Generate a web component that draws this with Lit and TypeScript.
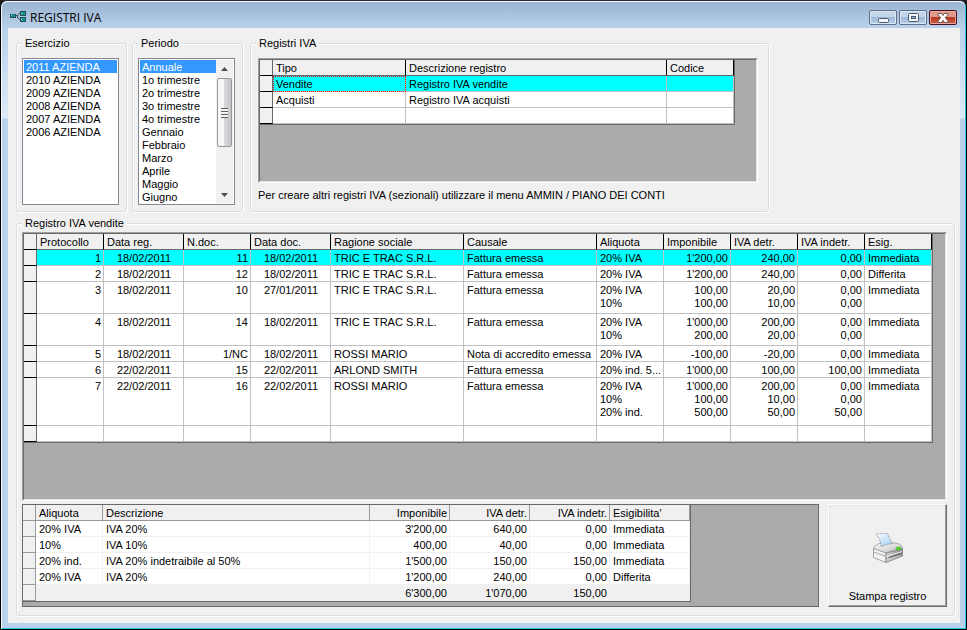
import { LitElement, html, css, svg, nothing } from "lit";
import { customElement, property } from "lit/decorators.js";
import { classMap } from "lit/directives/class-map.js";

type Align = "left" | "right" | "center";

interface Column {
  label: string;
  size: string;
  align?: Align;
}

interface Row {
  cells: string[][];
  selected?: boolean;
}

const row = (...cells: (string | string[])[]): Row => ({
  cells: cells.map((c) => (Array.isArray(c) ? c : [c])),
});

const REGISTER_COLUMNS: Column[] = [
  { label: "Tipo", size: "w133" },
  { label: "Descrizione registro", size: "w261" },
  { label: "Codice", size: "w67" },
];

const REGISTER_ROWS: Row[] = [
  { ...row("Vendite", "Registro IVA vendite", ""), selected: true },
  row("Acquisti", "Registro IVA acquisti", ""),
  row("", "", ""),
];

const ENTRY_COLUMNS: Column[] = [
  { label: "Protocollo", size: "w67", align: "right" },
  { label: "Data reg.", size: "w80", align: "center" },
  { label: "N.doc.", size: "w67", align: "right" },
  { label: "Data doc.", size: "w80", align: "center" },
  { label: "Ragione sociale", size: "w133" },
  { label: "Causale", size: "w133" },
  { label: "Aliquota", size: "w67" },
  { label: "Imponibile", size: "w67", align: "right" },
  { label: "IVA detr.", size: "w67", align: "right" },
  { label: "IVA indetr.", size: "w67", align: "right" },
  { label: "Esig.", size: "w67" },
];

const ENTRY_ROWS: Row[] = [
  {
    ...row("1", "18/02/2011", "11", "18/02/2011", "TRIC E TRAC S.R.L.", "Fattura emessa", "20% IVA", "1'200,00", "240,00", "0,00", "Immediata"),
    selected: true,
  },
  row("2", "18/02/2011", "12", "18/02/2011", "TRIC E TRAC S.R.L.", "Fattura emessa", "20% IVA", "1'200,00", "240,00", "0,00", "Differita"),
  row("3", "18/02/2011", "10", "27/01/2011", "TRIC E TRAC S.R.L.", "Fattura emessa", ["20% IVA", "10%"], ["100,00", "100,00"], ["20,00", "10,00"], ["0,00", "0,00"], "Immediata"),
  row("4", "18/02/2011", "14", "18/02/2011", "TRIC E TRAC S.R.L.", "Fattura emessa", ["20% IVA", "10%"], ["1'000,00", "200,00"], ["200,00", "20,00"], ["0,00", "0,00"], "Immediata"),
  row("5", "18/02/2011", "1/NC", "18/02/2011", "ROSSI MARIO", "Nota di accredito emessa", "20% IVA", "-100,00", "-20,00", "0,00", "Immediata"),
  row("6", "22/02/2011", "15", "22/02/2011", "ARLOND SMITH", "Fattura emessa", "20% ind. 5...", "1'000,00", "100,00", "100,00", "Immediata"),
  row("7", "22/02/2011", "16", "22/02/2011", "ROSSI MARIO", "Fattura emessa", ["20% IVA", "10%", "20% ind."], ["1'000,00", "100,00", "500,00"], ["200,00", "10,00", "50,00"], ["0,00", "0,00", "50,00"], "Immediata"),
  row("", "", "", "", "", "", "", "", "", "", ""),
];

const SUMMARY_COLUMNS: Column[] = [
  { label: "Aliquota", size: "w67" },
  { label: "Descrizione", size: "w267" },
  { label: "Imponibile", size: "w80", align: "right" },
  { label: "IVA detr.", size: "w80", align: "right" },
  { label: "IVA indetr.", size: "w80", align: "right" },
  { label: "Esigibilita'", size: "w80" },
];

const SUMMARY_ROWS: Row[] = [
  row("20% IVA", "IVA 20%", "3'200,00", "640,00", "0,00", "Immediata"),
  row("10%", "IVA 10%", "400,00", "40,00", "0,00", "Immediata"),
  row("20% ind.", "IVA 20% indetraibile al 50%", "1'500,00", "150,00", "150,00", "Immediata"),
  row("20% IVA", "IVA 20%", "1'200,00", "240,00", "0,00", "Differita"),
];

const SUMMARY_TOTAL = row("", "", "6'300,00", "1'070,00", "150,00", "");

const YEARS = ["2011", "2010", "2009", "2008", "2007", "2006"].map((y) => `${y} AZIENDA`);

const PERIODS = [
  "Annuale", "1o trimestre", "2o trimestre", "3o trimestre", "4o trimestre",
  "Gennaio", "Febbraio", "Marzo", "Aprile", "Maggio", "Giugno",
  "Luglio", "Agosto", "Settembre", "Ottobre", "Novembre", "Dicembre",
];

@customElement("data-grid")
export class DataGrid extends LitElement {
  @property({ attribute: false }) columns: Column[] = [];
  @property({ attribute: false }) rows: Row[] = [];
  @property({ attribute: false }) total?: Row;
  @property() label = "";
  @property({ type: Boolean }) flat = false;
  @property({ type: Boolean, attribute: "focus-cell" }) focusCell = false;

  static styles = css`
    :host {
      display: block;
      box-sizing: border-box;
      min-width: 0;
      overflow: hidden;
      background: #ababab;
      border: 1px solid;
      border-color: #a0a0a0 #fff #fff #a0a0a0;
    }
    :host([flat]) {
      border-color: #696969;
    }
    .well {
      box-sizing: border-box;
      height: 100%;
      border: 1px solid;
      border-color: #696969 #e3e3e3 #e3e3e3 #696969;
    }
    .well.flat {
      border: 0;
    }
    table {
      table-layout: fixed;
      width: 0;
      border-collapse: separate;
      border-spacing: 0;
      border: solid #696969;
      border-width: 0 1px 1px 0;
      background: #fff;
      color: #000;
      font-size: 11px;
      line-height: 13px;
    }
    .w13 { width: 13px; }
    .w67 { width: 67px; }
    .w80 { width: 80px; }
    .w133 { width: 133px; }
    .w261 { width: 261px; }
    .w267 { width: 267px; }
    th,
    td {
      box-sizing: border-box;
      height: 16px;
      padding: 2px 2px 0 3px;
      border: solid #c0c0c0;
      border-width: 0 1px 1px 0;
      font-weight: 400;
      text-align: left;
      vertical-align: top;
      white-space: nowrap;
      overflow: hidden;
    }
    .tall {
      height: 32px;
    }
    .taller {
      height: 48px;
    }
    thead th {
      background: #f0f0f0;
      border-color: #000;
      border-bottom-color: #696969;
    }
    .corner,
    .handle {
      padding: 0;
      background: #f0f0f0;
      border-color: #000;
      border-right-color: #696969;
    }
    .selected td {
      background: #0ff;
    }
    .selected .focused {
      outline: 1px dotted #f00;
      outline-offset: -1px;
    }
    .right { text-align: right; }
    .center { text-align: center; }
    .line { display: block; }
    .flat td {
      border-color: #f0f0f0;
    }
    .flat th {
      border-color: #999;
    }
    tfoot td {
      background: #f0f0f0;
    }
  `;

  private renderRow(r: Row, first = false) {
    const lines = Math.max(...r.cells.map((c) => c.length));
    return html`<tr class=${classMap({ selected: !!r.selected })}>
      <th class="handle" scope="row"></th>
      ${r.cells.map((cell, i) => {
        const align = this.columns[i].align ?? "left";
        return html`<td
          class=${classMap({
            [align]: true,
            tall: lines === 2,
            taller: lines === 3,
            focused: this.focusCell && first && i === 0,
          })}
        >${cell.length > 1 ? cell.map((t) => html`<span class="line">${t}</span>`) : cell[0]}</td>`;
      })}
    </tr>`;
  }

  render() {
    return html`<div class=${classMap({ well: true, flat: this.flat })}>
      <table aria-label=${this.label}>
        <colgroup>
          <col class="w13" />
          ${this.columns.map((c) => html`<col class=${c.size} />`)}
        </colgroup>
        <thead>
          <tr>
            <th class="corner"></th>
            ${this.columns.map(
              (c) => html`<th scope="col" class=${this.flat && c.align ? c.align : "left"}>${c.label}</th>`
            )}
          </tr>
        </thead>
        <tbody>
          ${this.rows.map((r, i) => this.renderRow(r, i === 0))}
        </tbody>
        ${this.total ? html`<tfoot>${this.renderRow(this.total)}</tfoot>` : nothing}
      </table>
    </div>`;
  }
}

const appIcon = svg`
  <svg class="app-icon" viewBox="0 0 16 12" width="16" height="12" aria-hidden="true" shape-rendering="crispEdges">
    <path d="M6 4h2v1H6zM8 3h1v1H8zM9 2h1v1H9zM7 5h1v2H7zM8 7h1v1H8zM9 8h1v1H9z" fill="#3c4a58"/>
    <rect x="0" y="3" width="6" height="4" fill="#2c4a58"/><rect x="1" y="3" width="4" height="3" fill="#0a8f86"/>
    <rect x="10" y="0" width="6" height="5" fill="#2c4a58"/><rect x="11" y="1" width="4" height="3" fill="#0a9a90"/>
    <rect x="10" y="6" width="6" height="5" fill="#2c4a58"/><rect x="11" y="7" width="4" height="3" fill="#0a9a90"/>
    <path d="M1 4h1v1H1zM11 2h1v1h-1zM11 8h1v1h-1z" fill="#9fe8e0"/>
  </svg>`;

const minimizeIcon = svg`
  <svg viewBox="0 0 12 10" width="12" height="10" aria-hidden="true">
    <rect x="1.500" y="5.500" width="10" height="4" rx="1" fill="#f4f6f8" stroke="#4b5a6e"/>
  </svg>`;

const maximizeIcon = svg`
  <svg viewBox="0 0 12 10" width="12" height="10" aria-hidden="true">
    <rect x="1.500" y=".5" width="10" height="8" rx="1" fill="#f4f6f8" stroke="#4b5a6e"/>
    <rect x="4.500" y="3.500" width="4" height="2" fill="#8fb0d4" stroke="#4b5a6e"/>
  </svg>`;

const closeIcon = svg`
  <svg viewBox="0 0 12 10" width="12" height="10" aria-hidden="true">
    <path d="M1 .5h3.500L6 2.500 7.500 .5H11v1L8.300 4.700 11 8v1.500H7.500L6 7.300 4.500 9.500H1V8l2.700-3.300L1 1.500z" fill="#fff" stroke="#5c4a50" stroke-width=".9"/>
  </svg>`;

const printerIcon = svg`
  <svg viewBox="0 0 30 30" width="30" height="30" aria-hidden="true">
    <defs>
      <linearGradient id="paper" x1="0" y1="0" x2="1" y2="1">
        <stop offset="0" stop-color="#f4faff"/><stop offset="1" stop-color="#a9cff5"/>
      </linearGradient>
      <linearGradient id="top" x1="0" y1="0" x2="1" y2="1">
        <stop offset="0" stop-color="#fafafa"/><stop offset=".5" stop-color="#dedede"/><stop offset="1" stop-color="#a4a4a4"/>
      </linearGradient>
      <linearGradient id="front" x1="0" y1="0" x2="1" y2="0">
        <stop offset="0" stop-color="#cfcfcf"/><stop offset="1" stop-color="#868686"/>
      </linearGradient>
    </defs>
    <path d="M.5 15.500Q1.500 12 6 10.500L19 9.500l7.500 1.500q3 2 3 4.500L13 21z" fill="url(#top)" stroke="#9a9a9a" stroke-width=".8"/>
    <path d="M3 1Q9-.2 15 .8q1.500 5 4.300 9.700Q13 10.500 8 13.300 7.500 6 3 1z" fill="url(#paper)"/>
    <path d="M8 13.300Q7.500 6 3 1 9-.2 15 .8q1.500 5 4.300 9.700" fill="none" stroke="#7c8894" stroke-width=".8" stroke-dasharray="1.500 1"/>
    <path d="M8 13.500q5-2.800 11.500-3" fill="none" stroke="#8e9aa6" stroke-width=".8"/>
    <path d="M.5 15.500L13 20v9.500L.5 24.500z" fill="#f4f4f4" stroke="#8e8e8e" stroke-width=".8"/>
    <path d="M13 20l16.500-4.500v7.500L13 29.500z" fill="url(#front)" stroke="#7c7c7c" stroke-width=".8"/>
    <path d="M.8 19L13 23.500" fill="none" stroke="#a2a2a2"/>
    <path d="M13 23.500L29 18.500" fill="none" stroke="#ececec"/>
    <path d="M15.500 24.500L28 20.500" fill="none" stroke="#606060"/>
    <path d="M15.500 27L28 22.500" fill="none" stroke="#d4d4d4" stroke-width=".8"/>
    <ellipse cx="25.500" cy="15.500" rx="2.600" ry="1.400" fill="#3fe01c" stroke="#5aa64a" stroke-width=".5"/>
  </svg>`;

@customElement("list-field")
export class ListField extends LitElement {
  @property() label = "";
  @property({ attribute: false }) items: string[] = [];
  @property({ type: Boolean }) scrollable = false;

  static styles = css`
    :host {
      display: flex;
      box-sizing: border-box;
      height: 147px;
      padding: 1px;
      border: 1px solid #828790;
      background: #fff;
      font-size: 11px;
    }
    select {
      flex: 1;
      min-width: 0;
      height: 100%;
      margin: 0;
      padding: 0;
      border: 0;
      border-radius: 0;
      outline: 0;
      background: #fff;
      color: #000;
      font: inherit;
      overflow-x: hidden;
      overflow-y: auto;
      scrollbar-width: none;
    }
    option {
      box-sizing: border-box;
      min-height: 13px;
      height: 13px;
      padding: 1px 2px 0;
      line-height: 12px;
    }
    option:checked {
      background: #39f linear-gradient(#39f, #39f);
      color: #fff;
    }
    .scrollbar {
      display: flex;
      flex-direction: column;
      flex: 0 0 17px;
      background: #f0f0f0;
    }
    .arrow {
      display: flex;
      align-items: center;
      justify-content: center;
      height: 17px;
      padding: 0;
      border: 0;
      background: none;
    }
    .track {
      flex: 1;
      padding: 1px 1px 0;
    }
    .thumb {
      box-sizing: border-box;
      height: 69px;
      border: 1px solid #979797;
      border-radius: 2px;
      background:
        repeating-linear-gradient(#606060 0 1px, #f4f4f4 1px 3px) center / 7px 10px no-repeat,
        linear-gradient(90deg, #f6f6f6 45%, #d9dadc 50%, #c4c5c8);
    }
  `;

  private scroll13(delta: number) {
    this.renderRoot.querySelector("select")?.scrollBy(0, delta * 13);
  }

  render() {
    return html`<select size="11" aria-label=${this.label}>
        ${this.items.map((t, i) => html`<option ?selected=${i === 0}>${t}</option>`)}
      </select>
      ${this.scrollable
        ? html`<div class="scrollbar">
            <button class="arrow" tabindex="-1" aria-label="Su" @click=${() => this.scroll13(-1)}>
              <svg viewBox="0 0 7 4" width="7" height="4"><path d="M0 4L3.500 0 7 4z" fill="#505050" /></svg>
            </button>
            <div class="track"><div class="thumb"></div></div>
            <button class="arrow" tabindex="-1" aria-label="Giu" @click=${() => this.scroll13(1)}>
              <svg viewBox="0 0 7 4" width="7" height="4"><path d="M0 0L3.500 4 7 0z" fill="#505050" /></svg>
            </button>
          </div>`
        : nothing}`;
  }
}

@customElement("app-root")
export class AppRoot extends LitElement {
  static styles = css`
    :host {
      display: block;
      background: #1c1c1c;
      font-family: "Liberation Sans", Arial, sans-serif;
      font-size: 11px;
      line-height: 13px;
      color: #000;
    }
    .window {
      box-sizing: border-box;
      min-height: 100vh;
      display: flex;
      flex-direction: column;
      border: 1px solid #000;
      border-top-color: #2c2a30;
      border-radius: 7px 7px 0 0;
      padding: 0 6px 6px;
      background:
        linear-gradient(#b9d1ea 27px, #dfeaf7 117px, #b9d1ea 118px) no-repeat,
        #b9d1ea;
      box-shadow:
        inset 1px 1px 0 #f4f8fc,
        inset -1px -1px 0 #25c4e4;
    }
    .titlebar {
      display: flex;
      align-items: center;
      height: 27px;
      margin: 0 -5px;
      padding: 1px 8px 0 8px;
      box-sizing: border-box;
      border-radius: 6px 6px 0 0;
      border-top: 1px solid #f4f8fc;
      background: linear-gradient(#99b4d1, #b9d1ea);
    }
    .app-icon {
      margin: 2px 4px 0 0;
    }
    h1 {
      flex: 1;
      margin: 0;
      padding-top: 4px;
      font: 400 12px/16px "Open Sans", "Noto Sans", sans-serif;
    }
    .controls {
      display: flex;
      gap: 2px;
      padding-top: 4px;
    }
    .control {
      display: flex;
      align-items: center;
      justify-content: center;
      box-sizing: border-box;
      width: 28px;
      height: 15px;
      padding: 0;
      border: 1px solid #5f6f88;
      border-radius: 2px;
      box-shadow: inset 0 0 0 1px #dbe7f4;
      background: linear-gradient(#c3d5e9 50%, #9db8d6 50%, #b8d0ea);
    }
    .close {
      border-color: #4a1020;
      box-shadow: inset 0 0 0 1px #e6a99f;
      background: linear-gradient(#e09a8c 45%, #b83820 50%, #d0604a);
    }
    main {
      flex: 1;
      display: flex;
      flex-direction: column;
      gap: 5px;
      margin: 0 0 0 1px;
      padding: 9px 5px 7px 8px;
      background: #f0f0f0;
    }
    .filters {
      display: flex;
      gap: 5px;
    }
    fieldset {
      box-sizing: border-box;
      min-width: 0;
      margin: 0;
      border: 1px solid #d5dfe5;
      border-radius: 3px;
      box-shadow:
        inset 1px 1px 0 #fff,
        1px 1px 0 #fff;
      padding: 8px 7px 6px 5px;
    }
    legend {
      padding: 0 3px;
      background: #f0f0f0;
    }
    .list {
      flex: 0 0 111px;
    }
    .registers {
      flex: 0 1 519px;
      display: flex;
      flex-direction: column;
      margin-left: 2px;
      padding-left: 5px;
      padding-right: 10px;
    }
    .registers > data-grid {
      flex: 1 0 125px;
      margin-left: 2px;
    }
    .note {
      margin: 6px 0 3px 2px;
    }
    .entries {
      flex: 1;
      display: flex;
      flex-direction: column;
      gap: 3px;
      padding: 2px 7px 7px 5px;
    }
    .entries > data-grid {
      flex: 1 0 269px;
    }
    .footer {
      display: flex;
      gap: 9px;
    }
    .footer data-grid {
      flex: 1;
    }
    .print {
      flex: 0 0 119px;
      display: flex;
      flex-direction: column;
      align-items: center;
      gap: 27px;
      padding: 28px 0 3px;
      border: 1px solid;
      border-color: #fff #696969 #696969 #fff;
      box-shadow:
        inset -1px -1px 0 #a0a0a0,
        inset 1px 1px 0 #e3e3e3;
      background: #f0f0f0;
      color: #000;
      font: inherit;
    }
  `;

  private renderList(title: string, items: string[], scrollable: boolean) {
    return html`<fieldset class="list">
      <legend>${title}</legend>
      <list-field label=${title} .items=${items} ?scrollable=${scrollable}></list-field>
    </fieldset>`;
  }

  render() {
    return html`<div class="window">
      <header class="titlebar">
        ${appIcon}
        <h1>REGISTRI IVA</h1>
        <div class="controls">
          <button class="control" aria-label="Riduci a icona">${minimizeIcon}</button>
          <button class="control" aria-label="Ingrandisci">${maximizeIcon}</button>
          <button class="control close" aria-label="Chiudi">${closeIcon}</button>
        </div>
      </header>
      <main>
        <div class="filters">
          ${this.renderList("Esercizio", YEARS, false)}
          ${this.renderList("Periodo", PERIODS, true)}
          <fieldset class="registers">
            <legend>Registri IVA</legend>
            <data-grid label="Registri IVA" focus-cell .columns=${REGISTER_COLUMNS} .rows=${REGISTER_ROWS}></data-grid>
            <p class="note">Per creare altri registri IVA (sezionali) utilizzare il menu AMMIN / PIANO DEI CONTI</p>
          </fieldset>
        </div>
        <fieldset class="entries">
          <legend>Registro IVA vendite</legend>
          <data-grid label="Registro IVA vendite" .columns=${ENTRY_COLUMNS} .rows=${ENTRY_ROWS}></data-grid>
          <div class="footer">
            <data-grid label="Riepilogo aliquote" flat .columns=${SUMMARY_COLUMNS} .rows=${SUMMARY_ROWS} .total=${SUMMARY_TOTAL}></data-grid>
            <button class="print">${printerIcon}<span>Stampa registro</span></button>
          </div>
        </fieldset>
      </main>
    </div>`;
  }
}
